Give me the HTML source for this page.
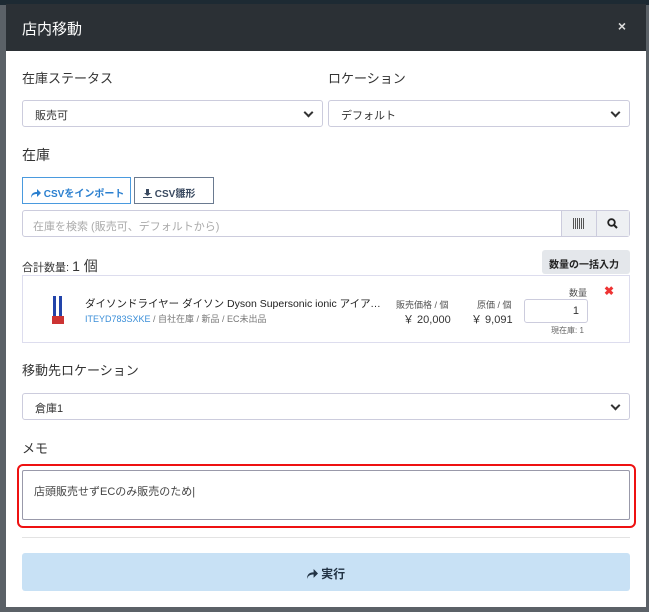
<!DOCTYPE html>
<html><head><meta charset="utf-8"><style>
*{box-sizing:border-box;margin:0;padding:0}
body{width:649px;height:612px;overflow:hidden;background:#5b6167;font-family:"Liberation Sans","Noto Sans CJK JP",sans-serif;position:relative;color:#333}
.top{position:absolute;left:0;top:0;width:649px;height:5px;background:#1d2a33}
.modal{position:absolute;left:6px;top:4px;width:640px;height:603px;background:#fff}
.hd{height:47px;background:#2b3035;color:#fff;font-size:15px;padding:14px 16px;position:relative}
.hd .x{position:absolute;right:20px;top:14px;font-size:14px;color:#ddd;font-weight:bold}
.a{position:absolute;font-size:13px;color:#333;white-space:nowrap}
.sel{position:absolute;height:27px;border:1px solid #ccd;border-radius:3px;font-size:11px;padding:6px 12px;background:#fff}
.sel:after{content:"";position:absolute;right:10px;top:8px;width:5px;height:5px;border-right:2px solid #333;border-bottom:2px solid #333;transform:rotate(45deg)}
.btn{position:absolute;height:27px;border:1px solid #4a9ade;font-size:10px;padding:7px 8px;color:#2a7fcf;white-space:nowrap;font-weight:bold}
.small{font-size:9px;color:#555;white-space:nowrap}
</style></head><body>
<div class="top"></div>
<div class="modal">
<div class="hd">店内移動<span class="x">×</span></div>
<div class="a" style="left:16px;top:64px">在庫ステータス</div>
<div class="a" style="left:322px;top:64px">ロケーション</div>
<div class="sel" style="left:16px;top:96px;width:301px">販売可</div>
<div class="sel" style="left:322px;top:96px;width:302px">デフォルト</div>
<div class="a" style="left:16px;top:141px;font-size:14px">在庫</div>
<div class="btn" style="left:16px;top:173px;width:109px"><svg width="10" height="9" viewBox="0 0 10 9" style="vertical-align:-1px"><path d="M0 9C0 4 3 3 6 3V0l4 4-4 4V5C3 5 1 6 0 9z" fill="#2a7fcf"/></svg> CSVをインポート</div>
<div class="btn" style="left:128px;top:173px;width:80px;border-color:#6a7a90;color:#3a4a60"><svg width="9" height="9" viewBox="0 0 9 9" style="vertical-align:-1px"><path d="M3 0h3v4h2L4.5 7 1 4h2zM0 8h9v1H0z" fill="#3a4a60"/></svg> CSV雛形</div>
<div style="position:absolute;left:16px;top:206px;width:608px;height:27px;border:1px solid #ccd;border-radius:3px;font-size:11px;color:#aaa;padding:7px 10px">在庫を検索 (販売可、デフォルトから)
<div style="position:absolute;right:0;top:0;width:68px;height:25px;background:#eef0f3;border-left:1px solid #ccd"><div style="position:absolute;left:34px;top:0;height:25px;border-left:1px solid #ccd"></div><span style="position:absolute;left:11px;top:7px;width:11px;height:11px;background:repeating-linear-gradient(90deg,#555 0 1px,#eef0f3 1px 2px)"></span><svg style="position:absolute;left:45px;top:7px" width="11" height="11" viewBox="0 0 11 11"><circle cx="4.5" cy="4.5" r="3.3" fill="none" stroke="#222" stroke-width="1.8"/><path d="M7 7l3 3" stroke="#222" stroke-width="2"/></svg></div></div>
<div class="a" style="left:16px;top:252px;font-size:11px">合計数量: <span style="font-size:14px">1 個</span></div>
<div style="position:absolute;left:536px;top:246px;width:88px;height:24px;background:#e4e7eb;border-radius:3px;font-size:10px;padding:6px 7px;color:#222;white-space:nowrap;font-weight:bold">数量の一括入力</div>
<div style="position:absolute;left:16px;top:271px;width:608px;height:68px;border:1px solid #dde">
<div style="position:absolute;left:30px;top:20px;width:3px;height:20px;background:#2244aa"></div><div style="position:absolute;left:36px;top:20px;width:3px;height:20px;background:#2244aa"></div><div style="position:absolute;left:29px;top:40px;width:12px;height:8px;background:#c33"></div>
<div style="position:absolute;left:62px;top:20px;width:300px;overflow:hidden;white-space:nowrap;text-overflow:ellipsis;font-size:10.5px;color:#222">ダイソンドライヤー ダイソン Dyson Supersonic ionic アイアン/フライ</div>
<div style="position:absolute;left:62px;top:36px;font-size:9px;color:#777;white-space:nowrap"><span style="color:#3a8ed8">ITEYD783SXKE</span> / 自社在庫 / 新品 / EC未出品</div>
<div class="small" style="position:absolute;left:373px;top:22px">販売価格 / 個</div>
<div style="position:absolute;left:380px;top:35px;font-size:11px">￥ 20,000</div>
<div class="small" style="position:absolute;left:454px;top:22px">原価 / 個</div>
<div style="position:absolute;left:448px;top:35px;font-size:11px">￥ 9,091</div>
<div class="small" style="position:absolute;left:546px;top:10px">数量</div>
<div style="position:absolute;left:501px;top:23px;width:64px;height:24px;border:1px solid #ccd;border-radius:3px;font-size:11px;text-align:right;padding:5px 8px">1</div>
<div style="position:absolute;left:528px;top:49px;font-size:8px;color:#666;white-space:nowrap">現在庫: 1</div>
<div style="position:absolute;left:581px;top:8px;color:#e33;font-size:12px;font-weight:bold">✖</div>
</div>
<div class="a" style="left:16px;top:356px">移動先ロケーション</div>
<div class="sel" style="left:16px;top:389px;width:608px">倉庫1</div>
<div class="a" style="left:16px;top:434px">メモ</div>
<div style="position:absolute;left:11px;top:460px;width:619px;height:64px;border:2px solid #e11;border-radius:6px"></div>
<div style="position:absolute;left:16px;top:466px;width:608px;height:50px;border:1px solid #99a;border-radius:2px;font-size:11px;padding:12px 11px;color:#444">店頭販売せずECのみ販売のため|</div>
<div style="position:absolute;left:16px;top:533px;width:608px;border-top:1px solid #e3e3e3"></div>
<div style="position:absolute;left:16px;top:549px;width:608px;height:38px;background:#c8e1f5;border-radius:3px;font-size:12px;color:#234;text-align:center;padding-top:12px;font-weight:bold"><svg width="11" height="10" viewBox="0 0 10 9" style="vertical-align:-1px"><path d="M0 9C0 4 3 3 6 3V0l4 4-4 4V5C3 5 1 6 0 9z" fill="#234"/></svg> 実行</div>
</div>
</body></html>
